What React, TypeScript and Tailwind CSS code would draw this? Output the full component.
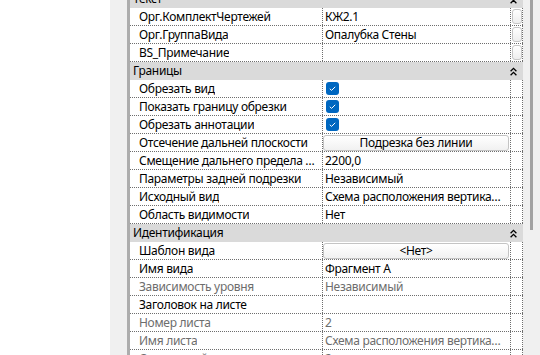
import React from "react";

type Row =
  | { kind: "header"; label: string }
  | {
      kind: "row";
      label: string;
      value?: string;
      type?: "text" | "check" | "button";
      dim?: boolean;
      edit?: boolean;
    };

const rows: Row[] = [
  { kind: "header", label: "Текст" },
  { kind: "row", label: "Орг.КомплектЧертежей", value: "КЖ2.1", edit: true },
  { kind: "row", label: "Орг.ГруппаВида", value: "Опалубка Стены", edit: true },
  { kind: "row", label: "BS_Примечание", value: "", edit: true },
  { kind: "header", label: "Границы" },
  { kind: "row", label: "Обрезать вид", type: "check" },
  { kind: "row", label: "Показать границу обрезки", type: "check" },
  { kind: "row", label: "Обрезать аннотации", type: "check" },
  { kind: "row", label: "Отсечение дальней плоскости", value: "Подрезка без линии", type: "button" },
  { kind: "row", label: "Смещение дальнего предела сечения", value: "2200,0" },
  { kind: "row", label: "Параметры задней подрезки", value: "Независимый" },
  { kind: "row", label: "Исходный вид", value: "Схема расположения вертикальных элементов" },
  { kind: "row", label: "Область видимости", value: "Нет" },
  { kind: "header", label: "Идентификация" },
  { kind: "row", label: "Шаблон вида", value: "<Нет>", type: "button" },
  { kind: "row", label: "Имя вида", value: "Фрагмент А" },
  { kind: "row", label: "Зависимость уровня", value: "Независимый", dim: true },
  { kind: "row", label: "Заголовок на листе", value: "" },
  { kind: "row", label: "Номер листа", value: "2", dim: true },
  { kind: "row", label: "Имя листа", value: "Схема расположения вертикальных элементов", dim: true },
  { kind: "row", label: "Ссылающийся лист", value: "2", dim: true },
];

function Chevrons() {
  return (
    <svg width="7" height="9" viewBox="0 0 7 9">
      <path
        d="M0.6 4.2 L3.5 1.3 L6.4 4.2 M0.6 8.2 L3.5 5.3 L6.4 8.2"
        fill="none"
        stroke="#000"
        strokeWidth="1.3"
      />
    </svg>
  );
}

function Check() {
  return (
    <div className="ml-[3px] flex h-[13px] w-[13px] items-center justify-center rounded-[3px] bg-[#0067c0]">
      <svg width="9" height="9" viewBox="0 0 9 9">
        <path d="M1.8 4.8 L3.6 6.4 L7.2 2.8" fill="none" stroke="#fff" strokeWidth="1" />
      </svg>
    </div>
  );
}

export default function App() {
  return (
    <div className="flex h-[355px] w-[540px] overflow-hidden bg-white font-['Noto_Sans',sans-serif] text-[12px] leading-[16px] tracking-[-0.3px] text-black">
      <div className="w-[110px] shrink-0 bg-white" />
      <div className="w-[17px] shrink-0 bg-[#f0f0f0]" />
      <div className="w-[3px] shrink-0 bg-[#adadad]" />

      <div className="-mt-[10px] w-[393px] shrink-0">
        {rows.map((r, i) =>
          r.kind === "header" ? (
            <div
              key={i}
              className="flex h-[18px] items-center justify-between bg-[#dadada] pl-[3px] pr-[6px]"
            >
              <span>{r.label}</span>
              <Chevrons />
            </div>
          ) : (
            <div
              key={i}
              className={`flex h-[18px] border-b border-dotted border-[#6e6e6e] ${
                r.dim ? "text-[#6d6d6d]" : "text-black"
              }`}
            >
              <div className="flex w-[193px] shrink-0 items-center overflow-hidden border-r border-dotted border-[#6e6e6e] pl-[9px] pr-[3px]">
                <span className="truncate">{r.label}</span>
              </div>
              <div className="flex w-[188px] shrink-0 items-center overflow-hidden border-r border-dotted border-[#6e6e6e]">
                {r.type === "check" ? (
                  <Check />
                ) : r.type === "button" ? (
                  <div className="flex h-[16px] w-[186px] items-center justify-center rounded-[3px] border border-[#c4c4c4] bg-gradient-to-b from-white to-[#f1f1f1]">
                    {r.value}
                  </div>
                ) : (
                  <span className="truncate pl-[2px] pr-[3px]">{r.value}</span>
                )}
              </div>
              <div className="flex w-[12px] shrink-0 items-center border-r border-dotted border-[#6e6e6e]">
                {r.edit && (
                  <div className="ml-[1px] h-[15px] w-[10px] rounded-[3px] border border-[#c6c6c6] bg-gradient-to-b from-white to-[#eeeeee]" />
                )}
              </div>
            </div>
          )
        )}
      </div>

      <div className="flex-1 bg-[#f0f0f0]">
        <div className="ml-[7px] h-[230px] w-[3px] bg-[#a2a2a2]" />
      </div>
    </div>
  );
}
